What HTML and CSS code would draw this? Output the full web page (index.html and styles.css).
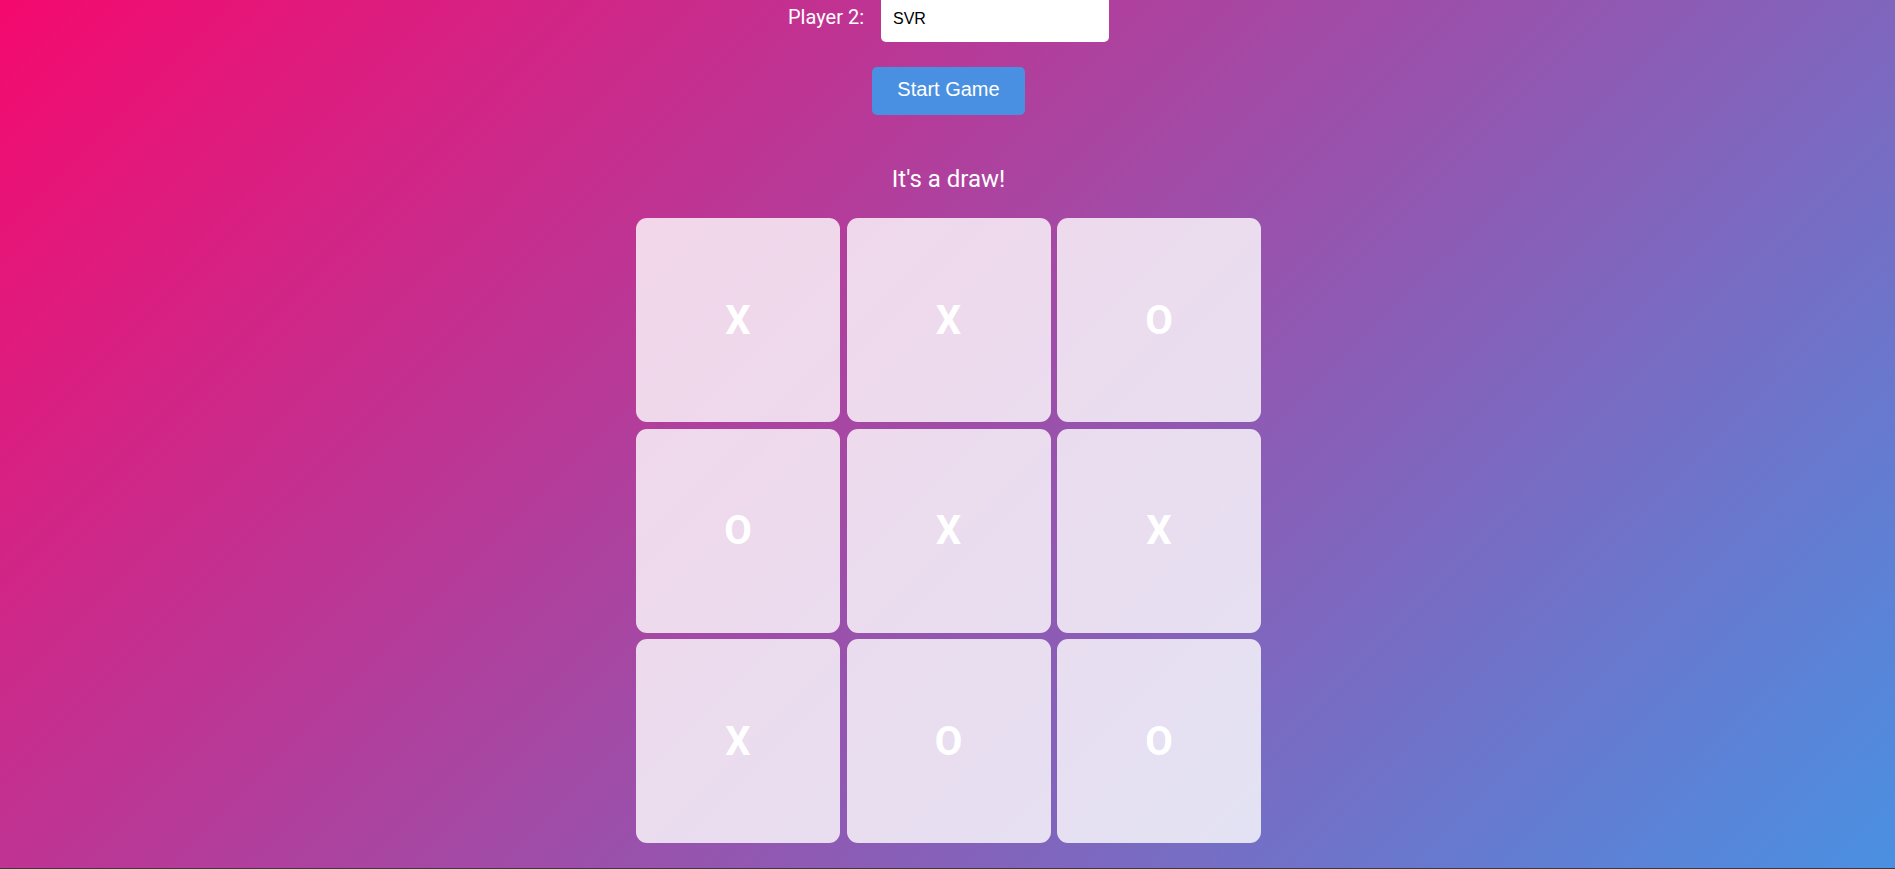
FILE: index.html
```html
<!DOCTYPE html>
<html lang="en">
<head>
<meta charset="utf-8">
<title>Tic Tac Toe</title>
<link rel="stylesheet" href="styles.css">
</head>
<body>
  <main class="game">
    <div class="player-row">
      <label class="player-label" for="p2">Player 2:</label>
      <input class="player-input" id="p2" type="text" value="SVR">
    </div>
    <button class="start-btn" type="button">Start Game</button>
    <div class="status">It's a draw!</div>
    <div class="board">
      <div class="cell">X</div>
      <div class="cell">X</div>
      <div class="cell">O</div>
      <div class="cell">O</div>
      <div class="cell">X</div>
      <div class="cell">X</div>
      <div class="cell">X</div>
      <div class="cell">O</div>
      <div class="cell">O</div>
    </div>
  </main>
</body>
</html>
```

FILE: styles.css
```css
html {
  height: 100%;
}

body {
  margin: 0;
  height: 100vh;
  box-sizing: border-box;
  overflow: hidden;
  border-bottom: 1px solid #3b3b3b;
  background: linear-gradient(135deg, #f5096e 0%, #4a90e2 100%);
  font-family: Roboto, "Liberation Sans", Arial, sans-serif;
  color: #ffffff;
  display: flex;
  flex-direction: column;
  justify-content: flex-end;
  align-items: center;
  padding-bottom: 25px;
}

.game {
  display: flex;
  flex-direction: column;
  align-items: center;
  padding-left: 2px;
}

.player-row {
  display: flex;
  align-items: baseline;
  gap: 17px;
}

.player-label {
  font-size: 20px;
}

.player-input {
  box-sizing: border-box;
  width: 228px;
  height: 46px;
  padding: 0 12px;
  border: none;
  border-radius: 5px;
  background: #ffffff;
  color: #000000;
  font-family: "Liberation Sans", Arial, sans-serif;
  font-size: 16px;
  outline: none;
}

.start-btn {
  margin-top: 25px;
  padding: 10px 25px 14px;
  border: none;
  border-radius: 5px;
  background: #4a90e2;
  color: #ffffff;
  font-family: "Liberation Sans", Arial, sans-serif;
  font-size: 20px;
  line-height: 24px;
  cursor: pointer;
}

.status {
  margin-top: 50px;
  font-size: 24px;
  line-height: 28px;
}

.board {
  margin-top: 25px;
  display: grid;
  grid-template-columns: repeat(3, 204px);
  grid-auto-rows: 204px;
  gap: 6.5px;
}

.cell {
  display: flex;
  align-items: center;
  justify-content: center;
  border-radius: 11px;
  background: rgba(255, 255, 255, 0.8);
  color: #ffffff;
  font-family: Roboto, "Liberation Sans", Arial, sans-serif;
  font-weight: bold;
  font-size: 40px;
  cursor: pointer;
}
```
